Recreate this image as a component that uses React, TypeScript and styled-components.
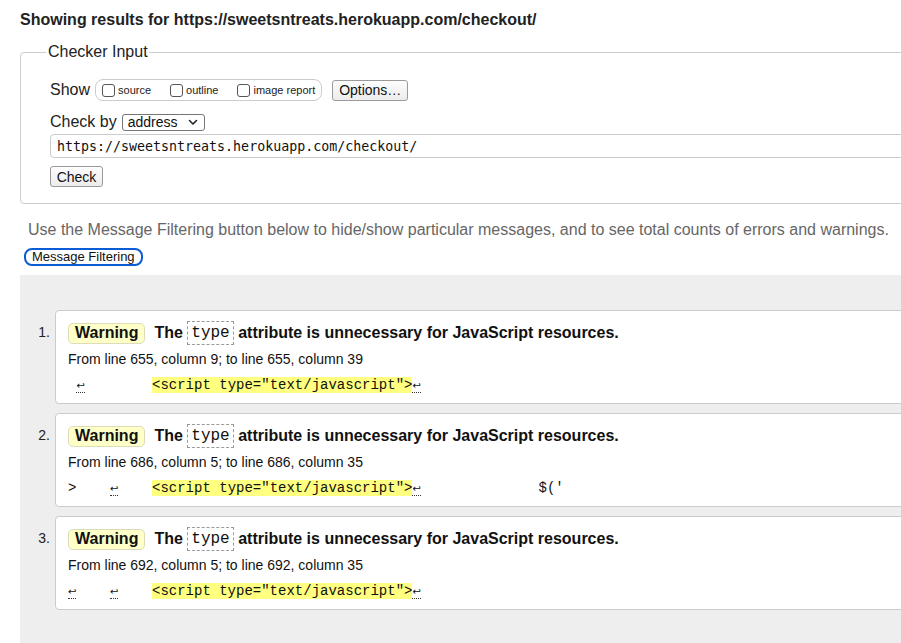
import React from "react";
import styled, { createGlobalStyle } from "styled-components";

const GlobalStyle = createGlobalStyle`
  html, body {
    margin: 0;
    padding: 0;
    background: #fff;
    overflow: hidden;
  }
  body {
    font-family: "Liberation Sans", Arial, Helvetica, sans-serif;
    color: #222;
  }
`;

const Page = styled.div`
  padding-left: 20px;
  width: 940px;
`;

const Heading = styled.h2`
  margin: 10px 0 0;
  font-size: 16px;
  line-height: 20px;
  font-weight: bold;
  color: #222;
`;

const Fieldset = styled.fieldset`
  margin: 13px 0 0;
  padding: 0 0 16px 29px;
  border: 1px solid #ccc;
  border-radius: 4px;
  min-width: 0;
`;

const Legend = styled.legend`
  margin-left: -4px;
  padding: 0 1px 0 2px;
  font-size: 16px;
  line-height: 18px;
  color: #222;
`;

const Row = styled.div<{ $top: number }>`
  display: flex;
  align-items: center;
  gap: 5px;
  margin-top: ${({ $top }) => $top}px;
  font-size: 16px;
`;

const CheckGroup = styled.div`
  display: flex;
  align-items: center;
  height: 20px;
  padding: 0 6px;
  border: 1px solid #ccc;
  border-radius: 8px;
  gap: 19px;
  margin-right: 5px;
`;

const CheckItem = styled.label`
  display: flex;
  align-items: center;
  font-size: 11px;
  gap: 3px;
  color: #222;
`;

const Box = styled.span`
  display: inline-block;
  width: 11px;
  height: 11px;
  border: 1px solid #555;
  border-radius: 3px;
  background: #fff;
`;

const Button = styled.button<{ $w: number }>`
  width: ${({ $w }) => $w}px;
  height: 21px;
  padding: 0;
  font-family: "Liberation Sans", Arial, sans-serif;
  font-size: 14px;
  color: #111;
  border: 1px solid #9a9a9a;
  border-radius: 3px;
  background: linear-gradient(#fdfdfd, #ececec);
`;

const Select = styled.div`
  display: flex;
  align-items: center;
  justify-content: space-between;
  width: 83px;
  height: 17px;
  box-sizing: border-box;
  padding: 0 6px 0 5px;
  border: 1px solid #767676;
  border-radius: 3px;
  font-size: 14px;
  color: #111;
`;

const UrlInput = styled.div`
  margin-top: 3px;
  height: 24px;
  box-sizing: border-box;
  padding-left: 6px;
  display: flex;
  align-items: center;
  border: 1px solid #ccc;
  border-radius: 4px;
  font-family: "DejaVu Sans Mono", monospace;
  font-size: 13.3px;
  color: #111;
`;

const CheckButtonWrap = styled.div`
  margin-top: 8px;
`;

const Intro = styled.p`
  margin: 16px 0 0 8px;
  font-size: 16px;
  line-height: 20px;
  color: #666;
`;

const FilterButton = styled.button`
  display: block;
  margin: 8px 0 0 4px;
  height: 18px;
  padding: 0 6px;
  font-family: "Liberation Sans", Arial, sans-serif;
  font-size: 13px;
  line-height: 14px;
  color: #111;
  background: #fff;
  border: 2px solid #0b5cd5;
  border-radius: 8px;
`;

const Panel = styled.div`
  margin-top: 9px;
  background: #eee;
  padding: 35px 0 40px;
  display: flex;
  flex-direction: column;
  gap: 9px;
`;

const Item = styled.div`
  display: flex;
  align-items: flex-start;
`;

const Num = styled.div`
  width: 30px;
  padding: 14px 5px 0 0;
  text-align: right;
  font-size: 14px;
  line-height: 16px;
  color: #222;
`;

const Message = styled.div`
  flex: 1;
  background: #fff;
  border: 1px solid #ccc;
  border-radius: 4px;
  padding: 10px 12px 8px;
`;

const Title = styled.div`
  display: flex;
  align-items: center;
  height: 24px;
  font-size: 16px;
  font-weight: bold;
  white-space: pre;
  color: #111;
`;

const Badge = styled.span`
  display: inline-flex;
  align-items: center;
  height: 21px;
  box-sizing: border-box;
  padding: 0 6px;
  margin-right: 9px;
  background: #ffffc8;
  border: 1px solid #dcdcb8;
  border-radius: 5px;
`;

const Code = styled.code`
  display: inline-flex;
  align-items: center;
  height: 24px;
  box-sizing: border-box;
  padding: 0 3px;
  border: 1px dashed #999;
  font-family: "Liberation Mono", "Courier New", monospace;
  font-size: 16px;
  font-weight: normal;
`;

const Location = styled.div`
  margin-top: 5px;
  font-size: 14px;
  line-height: 18px;
  color: #111;
`;

const Extract = styled.div`
  margin-top: 7px;
  font-family: "Liberation Mono", "Courier New", monospace;
  font-size: 14px;
  line-height: 20px;
  white-space: pre;
  color: #111;
`;

const Mark = styled.mark`
  background: #ffff80;
  color: #111;
`;

const Ret = styled.span`
  display: inline-block;
  width: 8.4px;
  line-height: 13px;
  font-family: "DejaVu Sans", sans-serif;
  font-size: 10px;
  text-align: center;
  border-bottom: 1px dotted #333;
`;

const Chevron = () => (
  <svg width="10" height="7" viewBox="0 0 10 7">
    <path d="M1.5 1.5 5 5l3.5-3.5" fill="none" stroke="#222" strokeWidth="1.6" strokeLinecap="round" strokeLinejoin="round" />
  </svg>
);

type Msg = {
  n: number;
  from: string;
  pre: React.ReactNode;
  post?: string;
};

const messages: Msg[] = [
  {
    n: 1,
    from: "From line 655, column 9; to line 655, column 39",
    pre: (
      <>
        {" "}
        <Ret>↩</Ret>
        {"        "}
      </>
    ),
  },
  {
    n: 2,
    from: "From line 686, column 5; to line 686, column 35",
    pre: (
      <>
        {">    "}
        <Ret>↩</Ret>
        {"    "}
      </>
    ),
    post: "              $('",
  },
  {
    n: 3,
    from: "From line 692, column 5; to line 692, column 35",
    pre: (
      <>
        <Ret>↩</Ret>
        {"    "}
        <Ret>↩</Ret>
        {"    "}
      </>
    ),
  },
];

export default function App() {
  return (
    <Page>
      <GlobalStyle />
      <Heading>Showing results for https://sweetsntreats.herokuapp.com/checkout/</Heading>

      <Fieldset>
        <Legend>Checker Input</Legend>
        <Row $top={18}>
          Show
          <CheckGroup>
            <CheckItem>
              <Box />
              source
            </CheckItem>
            <CheckItem>
              <Box />
              outline
            </CheckItem>
            <CheckItem>
              <Box />
              image report
            </CheckItem>
          </CheckGroup>
          <Button $w={76}>Options…</Button>
        </Row>
        <Row $top={12}>
          Check by
          <Select>
            address
            <Chevron />
          </Select>
        </Row>
        <UrlInput>https://sweetsntreats.herokuapp.com/checkout/</UrlInput>
        <CheckButtonWrap>
          <Button $w={53}>Check</Button>
        </CheckButtonWrap>
      </Fieldset>

      <Intro>
        Use the Message Filtering button below to hide/show particular messages, and to see total counts of errors
        and warnings.
      </Intro>
      <FilterButton>Message Filtering</FilterButton>

      <Panel>
        {messages.map((m) => (
          <Item key={m.n}>
            <Num>{m.n}.</Num>
            <Message>
              <Title>
                <Badge>Warning</Badge>
                {"The "}
                <Code>type</Code>
                {" attribute is unnecessary for JavaScript resources."}
              </Title>
              <Location>{m.from}</Location>
              <Extract>
                {m.pre}
                <Mark>{'<script type="text/javascript">'}</Mark>
                <Ret>↩</Ret>
                {m.post}
              </Extract>
            </Message>
          </Item>
        ))}
      </Panel>
    </Page>
  );
}
